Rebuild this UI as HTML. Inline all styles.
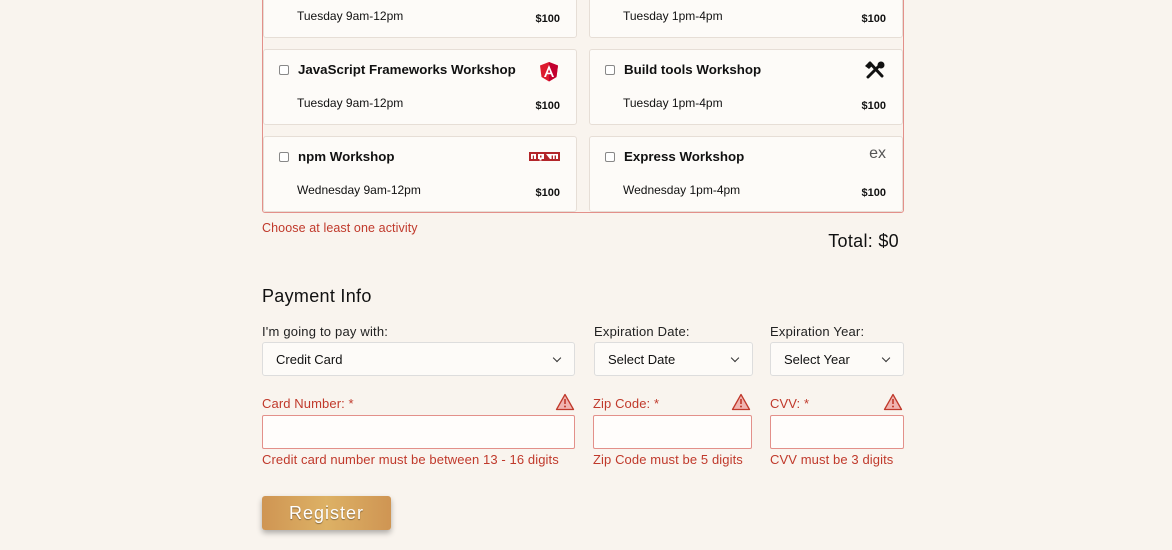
<!DOCTYPE html>
<html><head><meta charset="utf-8"><style>
*{box-sizing:border-box;margin:0;padding:0}
body{width:1172px;height:550px;overflow:hidden;background:#f9f4ee;font-family:"Liberation Sans",sans-serif;position:relative;color:#111}
.a{position:absolute}
.box{left:262px;top:-4px;width:642px;height:217px;border:1px solid #e3908a;border-radius:3px}
.card{position:absolute;width:314px;height:76px;background:#fdfbf8;border:1px solid #e6ded6;border-radius:3px}
.card .t{position:absolute;left:34px;top:12px;font-weight:bold;font-size:13.3px}
.card .cb{position:absolute;left:15px;top:15px;width:10px;height:10px;border:1px solid #888;border-radius:2px;background:#fff}
.card .d{position:absolute;left:33px;top:46px;font-size:12px}
.card .p{position:absolute;right:16px;top:50px;font-weight:bold;font-size:11px}
.card .ic{position:absolute;right:16px;top:12px}
.lbl{font-size:13.3px;color:#222;letter-spacing:.2px}
.err{color:#c0392b;font-size:13px;letter-spacing:.1px}
.sel{height:34px;background:#fdfbf8;border:1px solid #ddd;border-radius:3px;font-size:13px;padding:9px 13px;color:#111}
.sel:after{content:"";position:absolute;right:14px;top:12px;width:5px;height:5px;border-right:1.3px solid #333;border-bottom:1.3px solid #333;transform:rotate(45deg)}
.inp{height:34px;background:#fffdfb;border:1px solid #e3908a;border-radius:2px}
</style></head><body>
<div class="a box"></div>
<div class="card" style="left:263px;top:-38px"><div class="d">Tuesday 9am-12pm</div><div class="p">$100</div></div>
<div class="card" style="left:589px;top:-38px"><div class="d">Tuesday 1pm-4pm</div><div class="p">$100</div></div>

<div class="card" style="left:263px;top:49px"><div class="cb"></div><div class="t">JavaScript Frameworks Workshop</div>
<svg class="ic" style="right:16px;top:11px" width="22" height="22" viewBox="0 0 22 22"><path d="M11 1 L20 4.5 L18.5 16 L11 20.5 L3.5 16 L2 4.5Z" fill="#dd1b2e"/><path d="M11 1 L20 4.5 L18.5 16 L11 20.5Z" fill="#c3002f"/><path d="M11 4 L6 16 H8 L9 13.3 H13 L14 16 H16 Z M9.7 11.6 L11 8.3 L12.3 11.6Z" fill="#fff"/></svg>
<div class="d">Tuesday 9am-12pm</div><div class="p">$100</div></div>
<div class="card" style="left:589px;top:49px"><div class="cb"></div><div class="t">Build tools Workshop</div>
<svg class="ic" style="right:16px;top:11px" width="22" height="18" viewBox="0 0 22 18"><path d="M4 16 L16 4 M6 2 L18 15" stroke="#111" stroke-width="3" stroke-linecap="round"/><path d="M1 5 L5 1 L9 4 L5 8Z" fill="#111"/><circle cx="17" cy="4" r="3.5" fill="#111"/></svg>
<div class="d">Tuesday 1pm-4pm</div><div class="p">$100</div></div>

<div class="card" style="left:263px;top:136px"><div class="cb"></div><div class="t">npm Workshop</div>
<svg class="ic" style="right:16px;top:15px" width="31" height="10" viewBox="0 0 31 10"><rect width="31" height="9" fill="#b3262a"/><path d="M2 2h5v5h-2v-3.5h-1.2v3.5h-1.8z M9 2h6v5h-2.5v1.5h-2v-1.5h-1.5z M11 3.5v2h1.5v-2z M17 2h12v5h-2v-3.5h-1.4v3.5h-1.6v-3.5h-1.4v3.5h-1.6z" fill="#fff"/></svg>
<div class="d">Wednesday 9am-12pm</div><div class="p">$100</div></div>
<div class="card" style="left:589px;top:136px"><div class="cb"></div><div class="t">Express Workshop</div>
<div class="ic" style="font-size:16px;color:#555;top:8px;right:16px">ex</div>
<div class="d">Wednesday 1pm-4pm</div><div class="p">$100</div></div>

<div class="a err" style="left:262px;top:221px;font-size:12.5px">Choose at least one activity</div>
<div class="a" style="right:273px;top:231px;font-size:18px;letter-spacing:.3px">Total: $0</div>

<div class="a" style="left:262px;top:286px;font-size:18px;letter-spacing:.3px">Payment Info</div>
<div class="a lbl" style="left:262px;top:324px;font-size:13px">I'm going to pay with:</div>
<div class="a lbl" style="left:594px;top:324px;font-size:13px">Expiration Date:</div>
<div class="a lbl" style="left:770px;top:324px;font-size:13px">Expiration Year:</div>
<div class="a sel" style="left:262px;top:342px;width:313px">Credit Card</div>
<div class="a sel" style="left:594px;top:342px;width:159px">Select Date</div>
<div class="a sel" style="left:770px;top:342px;width:134px">Select Year</div>

<div class="a err" style="left:262px;top:396px">Card Number: *</div>
<div class="a err" style="left:593px;top:396px">Zip Code: *</div>
<div class="a err" style="left:770px;top:396px">CVV: *</div>
<svg class="a" style="left:555px;top:393px" width="20" height="18" viewBox="0 0 20 18"><path d="M10 1.5 L18.5 16.5 H1.5Z" fill="#f0b4b0" stroke="#c0392b" stroke-width="1.3" stroke-linejoin="round"/><path d="M10 6v5" stroke="#c0392b" stroke-width="1.6"/><circle cx="10" cy="13.5" r="1" fill="#c0392b"/></svg>
<svg class="a" style="left:731px;top:393px" width="20" height="18" viewBox="0 0 20 18"><path d="M10 1.5 L18.5 16.5 H1.5Z" fill="#f0b4b0" stroke="#c0392b" stroke-width="1.3" stroke-linejoin="round"/><path d="M10 6v5" stroke="#c0392b" stroke-width="1.6"/><circle cx="10" cy="13.5" r="1" fill="#c0392b"/></svg>
<svg class="a" style="left:883px;top:393px" width="20" height="18" viewBox="0 0 20 18"><path d="M10 1.5 L18.5 16.5 H1.5Z" fill="#f0b4b0" stroke="#c0392b" stroke-width="1.3" stroke-linejoin="round"/><path d="M10 6v5" stroke="#c0392b" stroke-width="1.6"/><circle cx="10" cy="13.5" r="1" fill="#c0392b"/></svg>
<div class="a inp" style="left:262px;top:415px;width:313px"></div>
<div class="a inp" style="left:593px;top:415px;width:159px"></div>
<div class="a inp" style="left:770px;top:415px;width:134px"></div>
<div class="a err" style="left:262px;top:452px">Credit card number must be between 13 - 16 digits</div>
<div class="a err" style="left:593px;top:452px">Zip Code must be 5 digits</div>
<div class="a err" style="left:770px;top:452px">CVV must be 3 digits</div>

<div class="a" style="left:262px;top:496px;width:129px;height:34px;border-radius:3px;background:linear-gradient(90deg,#cf9553,#ddb165 50%,#cf9553);box-shadow:0 3px 6px rgba(0,0,0,.3);color:#fff;font-size:18px;text-align:center;line-height:34px;letter-spacing:1px;text-shadow:0 1px 1px rgba(0,0,0,.4)">Register</div>
</body></html>
